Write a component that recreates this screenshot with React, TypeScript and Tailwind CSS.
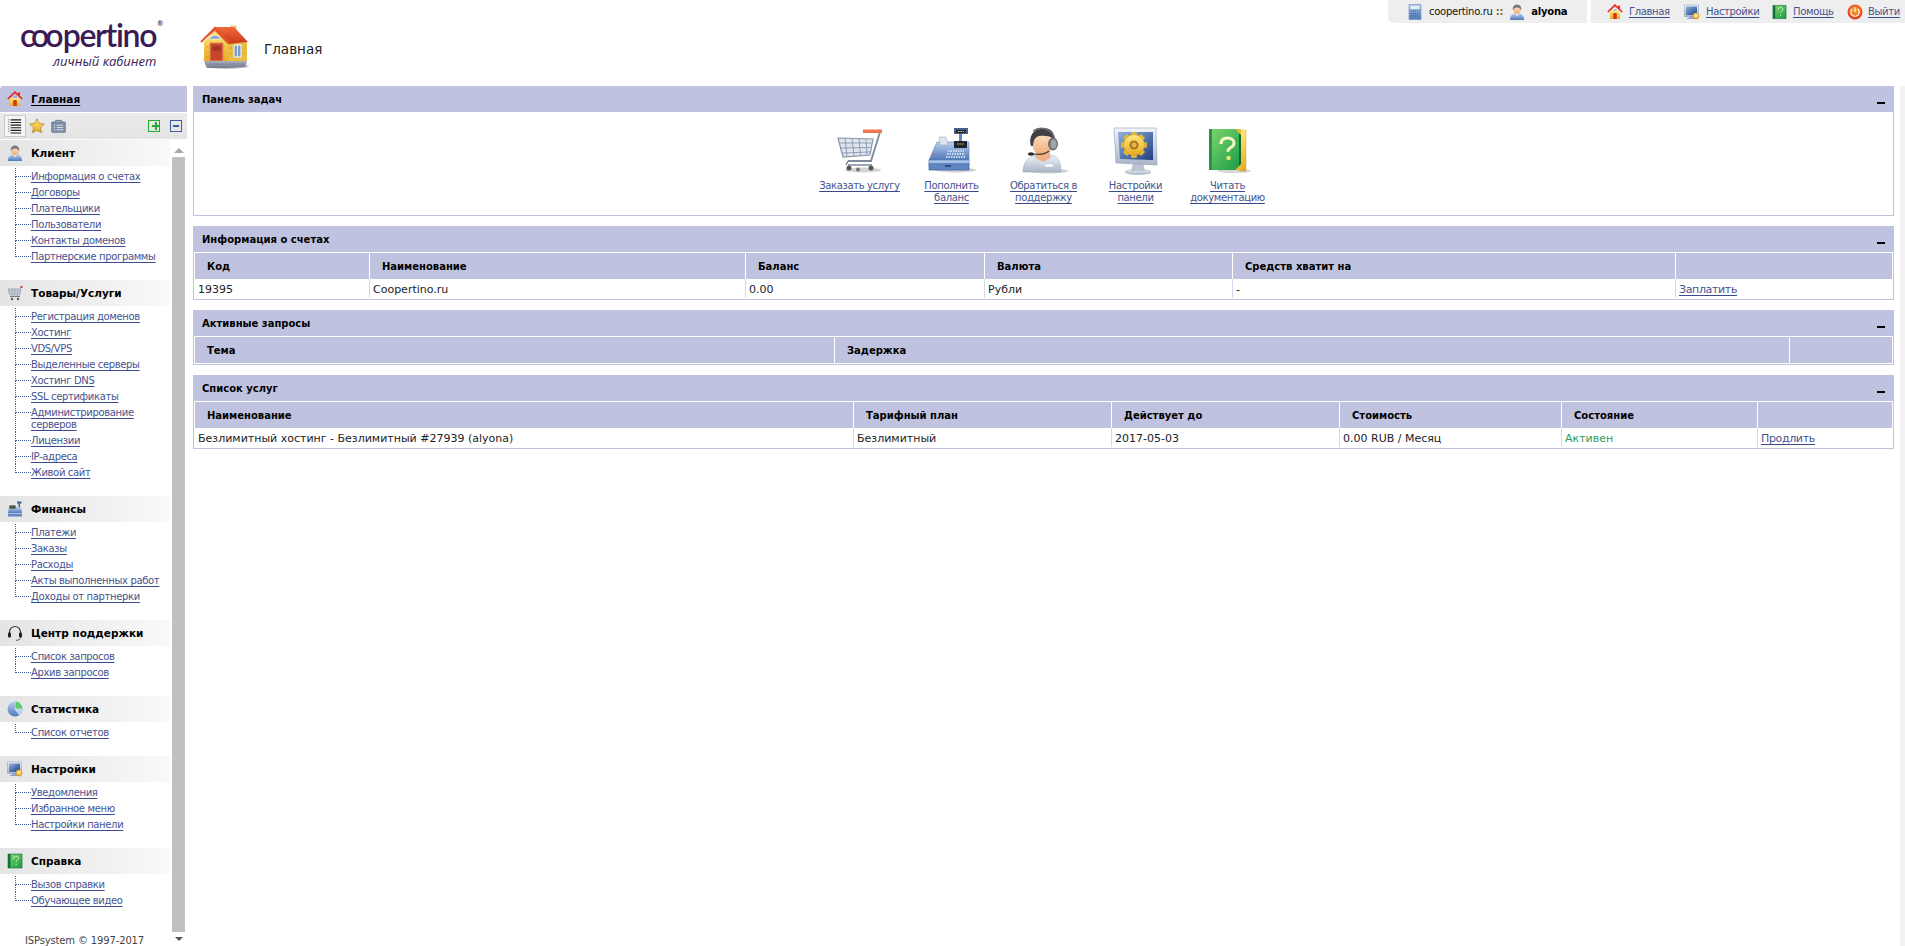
type IconProps = { className?: string }

// shared gradients for the glossy icons
function Defs() {
  return (
    <svg className="block h-0 w-0">
      <defs>
        <linearGradient id="gBlue" x1="0" y1="0" x2="0" y2="1">
          <stop offset="0" stopColor="#b9d0f2" />
          <stop offset="1" stopColor="#4f79b8" />
        </linearGradient>
        <linearGradient id="gScreen" x1="0" y1="0" x2="1" y2="1">
          <stop offset="0" stopColor="#8fb0de" />
          <stop offset="1" stopColor="#1f3f83" />
        </linearGradient>
        <linearGradient id="gSilver" x1="0" y1="0" x2="0" y2="1">
          <stop offset="0" stopColor="#f2f5fa" />
          <stop offset="1" stopColor="#a9b4c6" />
        </linearGradient>
        <linearGradient id="gYellow" x1="0" y1="0" x2="0" y2="1">
          <stop offset="0" stopColor="#ffe97a" />
          <stop offset="1" stopColor="#e8a91f" />
        </linearGradient>
        <linearGradient id="gRed" x1="0" y1="0" x2="0" y2="1">
          <stop offset="0" stopColor="#f0693a" />
          <stop offset="1" stopColor="#c9381c" />
        </linearGradient>
        <linearGradient id="gGreen" x1="0" y1="0" x2="1" y2="1">
          <stop offset="0" stopColor="#7ed86f" />
          <stop offset="1" stopColor="#1a9a45" />
        </linearGradient>
        <linearGradient id="gSkin" x1="0" y1="0" x2="0" y2="1">
          <stop offset="0" stopColor="#ffe3c4" />
          <stop offset="1" stopColor="#eeab78" />
        </linearGradient>
        <linearGradient id="gStone" x1="0" y1="0" x2="0" y2="1">
          <stop offset="0" stopColor="#a9b0bd" />
          <stop offset="1" stopColor="#727a8a" />
        </linearGradient>
        <radialGradient id="gPower" cx="0.5" cy="0.4" r="0.6">
          <stop offset="0" stopColor="#ffb02e" />
          <stop offset="1" stopColor="#e0301e" />
        </radialGradient>
      </defs>
    </svg>
  )
}

function BigHouse({ className }: IconProps) {
  return (
    <svg viewBox="0 0 50 46" className={className}>
      <ellipse cx="27" cy="42" rx="22" ry="3" fill="#c9c9c9" />
      <path d="M31 2h5v8h-5z" fill="url(#gYellow)" stroke="#c7902a" strokeWidth=".5" />
      <path d="M4 37V18L15 7l13 12v18z" fill="url(#gYellow)" />
      <path d="M28 19l19-1v19H28z" fill="#e8bb42" />
      <path d="M6 23h20M6 28h20M6 33h20M29 24h17M29 30h17" stroke="#d39a2c" strokeWidth=".7" strokeDasharray="3 1" />
      <path d="M1 18L15 3h19l14 15-20 2L15 7z" fill="url(#gRed)" />
      <path d="M1 18L15 4l14 15" fill="none" stroke="#e8552b" strokeWidth="2" />
      <path d="M10 13.500q5-4 10 0l1 1.500H9z" fill="#7f9fcf" stroke="#fff" strokeWidth=".6" />
      <path d="M10 19h13v18H10z" fill="#c7452a" stroke="#e88a5f" strokeWidth="1" />
      <path d="M12.500 22h8v5h-8z" fill="#a53820" />
      <path d="M34 21h7v12h-7z" fill="#7d9cc9" stroke="#fff" strokeWidth="1" />
      <path d="M37.500 21v12" stroke="#fff" strokeWidth=".8" />
      <path d="M4 37h24v7H7zM28 37h19l-2 6-17 1z" fill="url(#gStone)" />
      <path d="M5 40h22M29 40h17" stroke="#5f6675" strokeWidth=".6" strokeDasharray="2 2" />
    </svg>
  )
}

function SmallHouse({ className }: IconProps) {
  return (
    <svg viewBox="0 0 16 16" className={className}>
      <path d="M3 7h10v8H3z" fill="url(#gYellow)" />
      <path d="M6.200 9h3.600v6H6.200z" fill="#d4371f" />
      <path d="M6.500 5.500h3v1h-3z" fill="#6f94c8" />
      <path d="M.8 8L8 1.200 15.200 8" fill="none" stroke="#e8291d" strokeWidth="1.700" />
      <path d="M11 1.500h2v3h-2z" fill="#e8291d" />
    </svg>
  )
}

function Cart({ className }: IconProps) {
  return (
    <svg viewBox="0 0 48 48" className={className}>
      <ellipse cx="27" cy="43" rx="18" ry="2.500" fill="#d2d2d2" />
      <path d="M2 11l35 1-3 16-27 2z" fill="#dfe5ef" stroke="#8b96ab" strokeWidth="1.200" />
      <path d="M3 16l33 0M4.500 21l30-.5M6 26l28-1M9 11l2 19M16 11l2 18M23 11.500l1.500 17M30 12l1 16" stroke="#8b96ab" strokeWidth=".9" fill="none" />
      <path d="M44 5L35 34H12" fill="none" stroke="#7f8a9d" strokeWidth="1.800" />
      <path d="M12 38h24" stroke="#7f8a9d" strokeWidth="1.500" />
      <path d="M12 34l-2 4" stroke="#7f8a9d" strokeWidth="1.500" />
      <path d="M27 2h19v4H27z" fill="#e9734a" />
      <path d="M27 2h19v1.300H27z" fill="#f7b39a" />
      <circle cx="13" cy="41" r="2.500" fill="#555" />
      <circle cx="35" cy="41" r="2.500" fill="#555" />
      <circle cx="22" cy="42.500" r="2" fill="#777" />
    </svg>
  )
}

function Register({ className }: IconProps) {
  return (
    <svg viewBox="0 0 48 48" className={className}>
      <ellipse cx="28" cy="43" rx="20" ry="2.500" fill="#d2d2d2" />
      <path d="M1 33h40v10H1z" fill="#5f86c2" stroke="#3f649f" strokeWidth=".8" />
      <path d="M1 33h40v3H1z" fill="#a9c2e8" />
      <path d="M17 38h6v2h-6z" fill="#2d4a80" />
      <path d="M9 15h32v18H1z" fill="url(#gBlue)" stroke="#5d7fb5" strokeWidth=".6" />
      <path d="M26 14h13v7H26z" fill="#1e2230" />
      <path d="M29 17h7" stroke="#e7d95a" strokeWidth="1.200" strokeDasharray="1.500 1" />
      <path d="M31 5v9h3V5z" fill="#5f86c2" />
      <path d="M26 1h14v6H26z" fill="#44618f" />
      <path d="M28 3h10v3H28z" fill="#20242f" />
      <path d="M30 4.500h6" stroke="#e7d95a" strokeWidth="1" strokeDasharray="1.500 1" />
      <path d="M11 10h7l2 8h-8z" fill="#dfe4ec" stroke="#9aa5b8" strokeWidth=".5" />
      <path d="M4 27h1M6.500 27h1M9 27h1M11.500 27h1" stroke="#e04a3a" strokeWidth="1.200" />
      <path d="M20 24h16M19 27h18M18 30h19" stroke="#e7eefa" strokeWidth="1.300" strokeDasharray="1.500 1" />
    </svg>
  )
}

function Agent({ className }: IconProps) {
  return (
    <svg viewBox="0 0 48 48" className={className}>
      <ellipse cx="28" cy="44" rx="20" ry="2.500" fill="#d2d2d2" />
      <path d="M3 45c0-10 5-15 13-17l8 2 8-2c6 2 9 7 9 17z" fill="url(#gSilver)" stroke="#98a5b8" strokeWidth=".5" />
      <path d="M16 28l7 6 7-6 2 2-9 9-9-9z" fill="#d3dbe7" />
      <path d="M25 37h8v3h-8z" fill="#fff" stroke="#b6c0cf" strokeWidth=".4" />
      <path d="M15 22h15v9l-7 4-7-4z" fill="#f0b184" />
      <ellipse cx="22.500" cy="17" rx="10" ry="12" fill="url(#gSkin)" />
      <path d="M11 19C8 8 15 1 24 1c7 0 11 5 10 11-3-3-10-4-15-3-4 1-6 5-6 10z" fill="#3f3f44" />
      <path d="M13 4C20-1 33 1 35 13" fill="none" stroke="#6f7379" strokeWidth="1.500" />
      <ellipse cx="33" cy="17" rx="5" ry="6.500" fill="#6d7075" />
      <ellipse cx="33.500" cy="17" rx="3" ry="4.500" fill="#a2a5aa" />
      <path d="M29 24c-4 3-10 4-16 3" fill="none" stroke="#3a3a3a" strokeWidth="1.200" />
      <ellipse cx="11" cy="27" rx="3" ry="1.700" fill="#2e2e2e" />
    </svg>
  )
}

function gearPath(cx: number, cy: number, r: number) {
  // eight rectangular teeth round a disc
  let d = ''
  for (let i = 0; i < 8; i++) {
    const a = (i * Math.PI) / 4
    const w = r * 0.32
    const x1 = cx + Math.cos(a - 0.28) * r
    const y1 = cy + Math.sin(a - 0.28) * r
    const x2 = cx + Math.cos(a + 0.28) * r
    const y2 = cy + Math.sin(a + 0.28) * r
    const ox = Math.cos(a) * w
    const oy = Math.sin(a) * w
    d += `M${x1} ${y1}L${x1 + ox} ${y1 + oy}L${x2 + ox} ${y2 + oy}L${x2} ${y2}Z`
  }
  return d
}

function Monitor({ className }: IconProps) {
  return (
    <svg viewBox="0 0 48 48" className={className}>
      <ellipse cx="26" cy="45" rx="13" ry="2.500" fill="url(#gSilver)" stroke="#9aa5b8" strokeWidth=".5" />
      <path d="M21 36h10l2 8H19z" fill="#b9c3d2" />
      <path d="M2 1l42 0 1 37L4 36z" fill="url(#gSilver)" stroke="#8fa0b8" strokeWidth=".6" />
      <path d="M6 5l35 0 0 28L8 32z" fill="url(#gScreen)" />
      <path d={gearPath(22, 18, 10)} fill="#e9bb35" />
      <circle cx="22" cy="18" r="10.500" fill="url(#gYellow)" stroke="#c48d20" strokeWidth=".5" />
      <circle cx="22" cy="18" r="4.500" fill="#a9761c" />
      <circle cx="22" cy="18" r="2.500" fill="#e6b545" />
    </svg>
  )
}

function SmallMonitor({ className }: IconProps) {
  return (
    <svg viewBox="0 0 16 16" className={className}>
      <path d="M5 12.500h6v1.500h2v1H3v-1h2z" fill="#8aa3c7" />
      <path d="M.5 1h14v11.500H.5z" fill="url(#gSilver)" stroke="#7f95b8" strokeWidth=".5" />
      <path d="M2 2.500h11v8.500H2z" fill="url(#gScreen)" />
      <path d={gearPath(12, 12, 2.600)} fill="#c9921f" />
      <circle cx="12" cy="12" r="3" fill="url(#gYellow)" stroke="#b9831c" strokeWidth=".4" />
      <circle cx="12" cy="12" r="1" fill="#fff3c2" />
    </svg>
  )
}

function Book({ className }: IconProps) {
  return (
    <svg viewBox="0 0 48 48" className={className}>
      <ellipse cx="30" cy="44" rx="17" ry="2" fill="#d8d8d8" />
      <path d="M36 3h6v41h-6z" fill="url(#gYellow)" stroke="#b8952e" strokeWidth=".4" />
      <path d="M5 2h32v41H5z" fill="url(#gGreen)" />
      <path d="M5 2h3v41H5z" fill="#2a8f48" />
      <path d="M37 2l-2 1v40l2 1z" fill="#0f6b2b" />
      <path d="M17 17c0-4.500 3-6 6.500-6 4 0 6.500 2 6.500 5 0 2.500-1.500 3.700-3.500 4.700-1.800 1-2.700 2-2.700 4" fill="none" stroke="#f4f7c8" strokeWidth="3" />
      <circle cx="24.500" cy="31" r="2.200" fill="#f0e36a" />
      <path d="M31 43l6-6v7zM31 2l6 6V2z" fill="#e2b93a" />
    </svg>
  )
}

function SmallBook({ className }: IconProps) {
  return (
    <svg viewBox="0 0 16 16" className={className}>
      <path d="M1 1h14v14H1z" fill="url(#gGreen)" stroke="#0d7233" strokeWidth=".6" />
      <path d="M1 1h2.500v14H1z" fill="#0d7233" />
      <path d="M6.500 6c0-2 1.200-2.800 2.600-2.800 1.600 0 2.500 1 2.500 2.100 0 1.700-2.400 1.800-2.400 3.700" fill="none" stroke="#d9f3b5" strokeWidth="1" />
      <circle cx="9.200" cy="11.300" r=".7" fill="#d9f3b5" />
    </svg>
  )
}

function UserIcon({ className }: IconProps) {
  return (
    <svg viewBox="0 0 16 16" className={className}>
      <path d="M1 16c0-4 2-6 4-6.500h6c2 .5 4 2.500 4 6.500z" fill="url(#gBlue)" />
      <path d="M6 10l2 2 2-2-.5-1h-3z" fill="#f3f6fb" />
      <ellipse cx="8" cy="6" rx="3.600" ry="4.300" fill="url(#gSkin)" />
      <path d="M4 6.500C3 2.500 5.500.5 8 .5s5 2 4 6c-.5-2-2-3-4-3s-3.500 1-4 3z" fill="#777a80" />
    </svg>
  )
}

function SmallCart({ className }: IconProps) {
  return (
    <svg viewBox="0 0 16 16" className={className}>
      <path d="M1 4h13l-1.500 6H3z" fill="#dbe1ea" stroke="#7f8a9d" strokeWidth=".7" />
      <path d="M1.500 6h12M2.500 8h10.500M5 4l.7 6M8 4v6M11 4l-.7 6" stroke="#7f8a9d" strokeWidth=".5" />
      <path d="M3 11.500h10" stroke="#6f7a8d" strokeWidth="1" />
      <circle cx="5" cy="14" r="1.200" fill="#555" />
      <circle cx="11" cy="14" r="1.200" fill="#555" />
      <path d="M13.500 1h2v2h-2z" fill="#d8392b" />
    </svg>
  )
}

function SmallRegister({ className }: IconProps) {
  return (
    <svg viewBox="0 0 16 16" className={className}>
      <path d="M1 12h14v3.500H1z" fill="#5f86c2" />
      <path d="M1 12h14v1H1z" fill="#a9c2e8" />
      <path d="M2 6h12l1 6H1z" fill="url(#gBlue)" />
      <path d="M2.500 4.500h6v3h-6z" fill="#20242f" />
      <path d="M3.500 6h4" stroke="#e7d95a" strokeWidth=".9" strokeDasharray="1 .6" />
      <path d="M10 .5h4.500v2H10zM11.500 2.500h1.500V6h-1.500z" fill="#44618f" />
    </svg>
  )
}

function Headset({ className }: IconProps) {
  return (
    <svg viewBox="0 0 16 16" className={className}>
      <path d="M2.500 9.500V7a5.500 5.500 0 0 1 11 0v2.500" fill="none" stroke="#333" strokeWidth="1.200" />
      <rect x="1" y="7.500" width="3" height="5" rx="1.200" fill="#222" />
      <rect x="12" y="7.500" width="3" height="5" rx="1.200" fill="#222" />
      <path d="M13.500 12.500c0 2-2 2.800-4.500 2.800" fill="none" stroke="#444" strokeWidth=".9" />
    </svg>
  )
}

function PieIcon({ className }: IconProps) {
  return (
    <svg viewBox="0 0 16 16" className={className}>
      <circle cx="8" cy="8" r="7.500" fill="url(#gBlue)" />
      <path d="M8 8V.5a7.500 7.500 0 0 1 7.500 7.500z" fill="#5ec86a" />
      <path d="M8 8h7.500a7.500 7.500 0 0 1-3 6z" fill="#b5d3f2" />
      <path d="M8 8V.5M8 8h7.500M8 8l4.500 6" stroke="#f2f6fc" strokeWidth=".6" />
    </svg>
  )
}

function Calculator({ className }: IconProps) {
  return (
    <svg viewBox="0 0 14 16" className={className}>
      <path d="M1 .5h12v15H1z" fill="url(#gBlue)" stroke="#6a8ac0" strokeWidth=".6" />
      <path d="M2.500 2h9v3h-9z" fill="#e6eefb" />
      <path d="M2.500 7h9M2.500 9.500h9M2.500 12h9" stroke="#35558f" strokeWidth="1.200" strokeDasharray="1.300 .8" />
    </svg>
  )
}

function Power({ className }: IconProps) {
  return (
    <svg viewBox="0 0 16 16" className={className}>
      <circle cx="8" cy="8" r="7.500" fill="url(#gPower)" />
      <path d="M5.200 5a4.200 4.200 0 1 0 5.600 0" fill="none" stroke="#fff3dc" strokeWidth="1.300" />
      <path d="M8 3v5" stroke="#fff3dc" strokeWidth="1.300" />
    </svg>
  )
}

function Star({ className }: IconProps) {
  return (
    <svg viewBox="0 0 16 16" className={className}>
      <path d="M8 .8l2.200 4.700 5.100.6-3.800 3.500 1 5.100L8 12.200l-4.500 2.500 1-5.100L.7 6.100l5.100-.6z" fill="url(#gYellow)" stroke="#a9771a" strokeWidth=".7" />
    </svg>
  )
}

function Briefcase({ className }: IconProps) {
  return (
    <svg viewBox="0 0 16 16" className={className}>
      <path d="M5 3.500V2h6v1.500" fill="none" stroke="#5f7186" strokeWidth="1" />
      <rect x=".5" y="3.500" width="15" height="11.500" rx="1.500" fill="#7b8ea5" stroke="#58697e" strokeWidth=".5" />
      <path d="M6 7h7M6 9.500h7M6 12h7" stroke="#e8eef5" strokeWidth=".9" />
      <path d="M3 7h1.500M3 9.500h1.500M3 12h1.500" stroke="#e8eef5" strokeWidth=".9" />
    </svg>
  )
}

function ListIcon({ className }: IconProps) {
  return (
    <svg viewBox="0 0 16 18" className={className}>
      <path d="M1 1v16" stroke="#555" strokeDasharray="1 1" />
      <path d="M3 2h12M3 5h12M3 8h12M3 11h12M3 14h12M3 17h12" stroke="#1d1d1d" strokeWidth="1.200" />
    </svg>
  )
}

function Logo() {
  return (
    <div className="ml-[20px] mt-[18px] w-[165px] font-['Lato'] text-[#3a1b57]">
      <div className="flex h-[34px] items-start text-[32px] leading-[34px] font-semibold tracking-[-1.3px]">
        <span className="mr-[3px] tracking-[-4px]">coo</span>
        <span>pertino</span>
        <span className="ml-[1px] mt-[1px] text-[7px] leading-[8px] tracking-normal">®</span>
      </div>
      <div className="ml-[33px] font-['Open_Sans'] text-[13px] italic leading-[18px] font-medium">личный кабинет</div>
    </div>
  )
}

function Link({ children }: { children: React.ReactNode }) {
  return <a className="cursor-pointer tracking-[-0.35px] text-[#46548f] underline decoration-[#3b4a8c] underline-offset-[2px]">{children}</a>
}

function TopBar() {
  return (
    <div className="flex h-[23px] items-center text-[10px] text-[#222]">
      <div className="flex h-full w-[199px] items-center rounded-bl-[6px] bg-[#eeeeee] pl-[20px]">
        <Calculator className="h-[16px] w-[14px]" />
        <span className="ml-[7px] tracking-[-0.25px] text-[#111]">coopertino.ru <b className="text-[#7a6a20]">::</b></span>
        <UserIcon className="ml-[6px] h-[16px] w-[16px]" />
        <b className="ml-[6px] tracking-[-0.2px] text-black">alyona</b>
      </div>
      <div className="ml-[4px] flex h-full flex-1 items-center bg-[#eeeeee] pl-[16px]">
        <SmallHouse className="h-[16px] w-[16px]" />
        <span className="ml-[6px] w-[51px]"><Link>Главная</Link></span>
        <SmallMonitor className="ml-[4px] h-[16px] w-[16px]" />
        <span className="ml-[6px] w-[60px]"><Link>Настройки</Link></span>
        <SmallBook className="ml-[6px] h-[16px] w-[15px]" />
        <span className="ml-[6px] w-[50px]"><Link>Помощь</Link></span>
        <Power className="ml-[4px] h-[16px] w-[16px]" />
        <span className="ml-[5px]"><Link>Выйти</Link></span>
      </div>
    </div>
  )
}

const menu = [
  { title: 'Клиент', Icon: UserIcon, items: ['Информация о счетах', 'Договоры', 'Плательщики', 'Пользователи', 'Контакты доменов', 'Партнерские программы'] },
  { title: 'Товары/Услуги', Icon: SmallCart, items: ['Регистрация доменов', 'Хостинг', 'VDS/VPS', 'Выделенные серверы', 'Хостинг DNS', 'SSL сертификаты', 'Администрирование серверов', 'Лицензии', 'IP-адреса', 'Живой сайт'] },
  { title: 'Финансы', Icon: SmallRegister, items: ['Платежи', 'Заказы', 'Расходы', 'Акты выполненных работ', 'Доходы от партнерки'] },
  { title: 'Центр поддержки', Icon: Headset, items: ['Список запросов', 'Архив запросов'] },
  { title: 'Статистика', Icon: PieIcon, items: ['Список отчетов'] },
  { title: 'Настройки', Icon: SmallMonitor, items: ['Уведомления', 'Избранное меню', 'Настройки панели'] },
  { title: 'Справка', Icon: SmallBook, items: ['Вызов справки', 'Обучающее видео'] },
]

function Sidebar() {
  return (
    <div className="flex h-full w-[187px] shrink-0 flex-col">
      <div className="flex h-[26px] shrink-0 items-center rounded-tl-[4px] bg-[#bfc3df] pl-[7px] text-[10.5px] font-bold text-black">
        <SmallHouse className="h-[16px] w-[16px]" />
        <span className="ml-[8px] pt-px underline underline-offset-[2px]">Главная</span>
      </div>
      <div className="mt-px flex h-[26px] shrink-0 items-center bg-gradient-to-b from-[#ececec] to-[#e3e3e3] pl-[4px]">
        <div className="flex h-[22px] w-[22px] items-center justify-center border border-[#c9c9c9] bg-[#f5f5f5]">
          <ListIcon className="h-[16px] w-[14px]" />
        </div>
        <Star className="ml-[3px] h-[16px] w-[16px]" />
        <Briefcase className="ml-[6px] h-[16px] w-[15px]" />
        <div className="ml-[82px] flex h-[12px] w-[12px] items-center justify-center border border-[#1eaa2e] text-[#1eaa2e]">
          <span className="h-[2px] w-[8px] bg-[#1eaa2e]" />
          <span className="-ml-[5px] h-[8px] w-[2px] bg-[#1eaa2e]" />
        </div>
        <div className="ml-[10px] flex h-[12px] w-[12px] items-center justify-center border border-[#3f5f9a]">
          <span className="h-[2px] w-[6px] bg-[#3f5f9a]" />
        </div>
      </div>
      <div className="mt-px flex min-h-0 flex-1">
        <div className="w-[170px] shrink-0 overflow-hidden">
          {menu.map((s) => (
            <div key={s.title} className="mb-[16px]">
              <div className="flex h-[26px] items-center bg-gradient-to-r from-[#e4e4e4] to-[#f9f9f9] pl-[7px] text-[10.5px] font-bold text-black">
                <s.Icon className="h-[16px] w-[16px]" />
                <span className="ml-[8px] pt-px">{s.title}</span>
              </div>
              <ul className="ml-[15px] pt-[2px] text-[10px] leading-[12px]">
                {s.items.map((item, i) => (
                  <li key={item} className="flex">
                    <div className="flex w-[16px] shrink-0 flex-col">
                      <div className="h-[9px] border-b border-l border-dotted border-[#3b5a9c]" />
                      <div className={i < s.items.length - 1 ? 'flex-1 border-l border-dotted border-[#3b5a9c]' : 'flex-1'} />
                    </div>
                    <div className="pb-px pt-[3px]"><Link>{item}</Link></div>
                  </li>
                ))}
              </ul>
            </div>
          ))}
          <div className="mt-[26px] pl-[25px] text-[10px] leading-[14px] tracking-[-0.15px] text-[#444]">ISPsystem © 1997-2017</div>
        </div>
        <div className="ml-[2px] flex w-[13px] flex-col items-center">
          <span className="mt-[8px] h-0 w-0 border-x-[5px] border-b-[5px] border-x-transparent border-b-[#a8a8a8]" />
          <span className="mt-[4px] w-full flex-1 bg-[#c0c0c0]" />
          <span className="mb-[5px] mt-[5px] h-0 w-0 border-x-[4px] border-t-[4px] border-x-transparent border-t-[#555]" />
        </div>
      </div>
    </div>
  )
}

function PanelHead({ title }: { title: string }) {
  return (
    <div className="flex h-[26px] items-start justify-between bg-[#bfc3df] pl-[9px] pr-[9px] text-[10px] font-bold text-black">
      <span className="mt-[7px] leading-[14px]">{title}</span>
      <span className="mt-[16px] h-[2px] w-[8px] bg-black" />
    </div>
  )
}

const tasks = [
  { Icon: Cart, label: ['Заказать услугу'] },
  { Icon: Register, label: ['Пополнить', 'баланс'] },
  { Icon: Agent, label: ['Обратиться в', 'поддержку'] },
  { Icon: Monitor, label: ['Настройки', 'панели'] },
  { Icon: Book, label: ['Читать', 'документацию'] },
]

function TaskPanel() {
  return (
    <div>
      <PanelHead title="Панель задач" />
      <div className="flex h-[104px] justify-center border-x border-b border-[#bfc3df] pt-[15px]">
        {tasks.map((t) => (
          <div key={t.label[0]} className="flex w-[92px] flex-col items-center text-[10px] leading-[12px]">
            <t.Icon className="h-[48px] w-[48px]" />
            <div className="mt-[5px] text-center">
              {t.label.map((l) => (
                <div key={l}><Link>{l}</Link></div>
              ))}
            </div>
          </div>
        ))}
      </div>
    </div>
  )
}

type Col = { title: string; w: string }

function DataPanel({ title, cols, row }: { title: string; cols: Col[]; row?: React.ReactNode[] }) {
  return (
    <div>
      <PanelHead title={title} />
      <div className="border-x border-b border-[#bfc3df] px-px pt-px pb-px">
        <table className="w-full table-fixed border-separate border-spacing-0">
          <thead>
            <tr>
              {cols.map((c, i) => (
                <th key={i} className={`${c.w} h-[26px] bg-[#bfc3df] pl-[12px] text-left text-[10px] font-bold text-black ${i < cols.length - 1 ? 'border-r border-white' : ''}`}>
                  {c.title}
                </th>
              ))}
            </tr>
          </thead>
          {row && (
            <tbody>
              <tr>
                {row.map((cell, i) => (
                  <td key={i} className={`h-[19px] pl-[3px] pt-[2px] text-[11px] leading-[17px] text-[#222] ${i < row.length - 1 ? 'border-r border-[#d5d8ea]' : ''}`}>
                    {cell}
                  </td>
                ))}
              </tr>
            </tbody>
          )}
        </table>
      </div>
    </div>
  )
}

export default function App() {
  return (
    <div className="flex h-[946px] flex-col overflow-hidden bg-white font-['DejaVu_Sans',sans-serif]">
      <Defs />
      <div className="flex h-[86px] shrink-0">
        <div className="w-[187px] shrink-0"><Logo /></div>
        <div className="flex pt-[24px]">
          <BigHouse className="ml-[13px] h-[46px] w-[50px]" />
          <div className="ml-[14px] mt-[17px] text-[13.5px] leading-[16px] text-[#222]">Главная</div>
        </div>
        <div className="ml-auto w-[517px]"><TopBar /></div>
      </div>
      <div className="flex min-h-0 flex-1">
        <Sidebar />
        <div className="ml-[6px] flex w-[1701px] flex-col gap-[10px]">
          <TaskPanel />
          <DataPanel
            title="Информация о счетах"
            cols={[
              { title: 'Код', w: 'w-[175px]' },
              { title: 'Наименование', w: 'w-[376px]' },
              { title: 'Баланс', w: 'w-[239px]' },
              { title: 'Валюта', w: 'w-[248px]' },
              { title: 'Средств хватит на', w: 'w-[443px]' },
              { title: '', w: 'w-[216px]' },
            ]}
            row={['19395', 'Coopertino.ru', '0.00', 'Рубли', '-', <Link key="pay">Заплатить</Link>]}
          />
          <DataPanel
            title="Активные запросы"
            cols={[
              { title: 'Тема', w: 'w-[640px]' },
              { title: 'Задержка', w: 'w-[955px]' },
              { title: '', w: 'w-[102px]' },
            ]}
          />
          <DataPanel
            title="Список услуг"
            cols={[
              { title: 'Наименование', w: 'w-[659px]' },
              { title: 'Тарифный план', w: 'w-[258px]' },
              { title: 'Действует до', w: 'w-[228px]' },
              { title: 'Стоимость', w: 'w-[222px]' },
              { title: 'Состояние', w: 'w-[196px]' },
              { title: '', w: 'w-[134px]' },
            ]}
            row={[
              'Безлимитный хостинг - Безлимитный #27939 (alyona)',
              'Безлимитный',
              '2017-05-03',
              '0.00 RUB / Месяц',
              <span key="st" className="text-[#2f9a5f]">Активен</span>,
              <Link key="ext">Продлить</Link>,
            ]}
          />
        </div>
        <div className="ml-auto w-[5px] bg-[#f3f3f3]" />
      </div>
    </div>
  )
}
